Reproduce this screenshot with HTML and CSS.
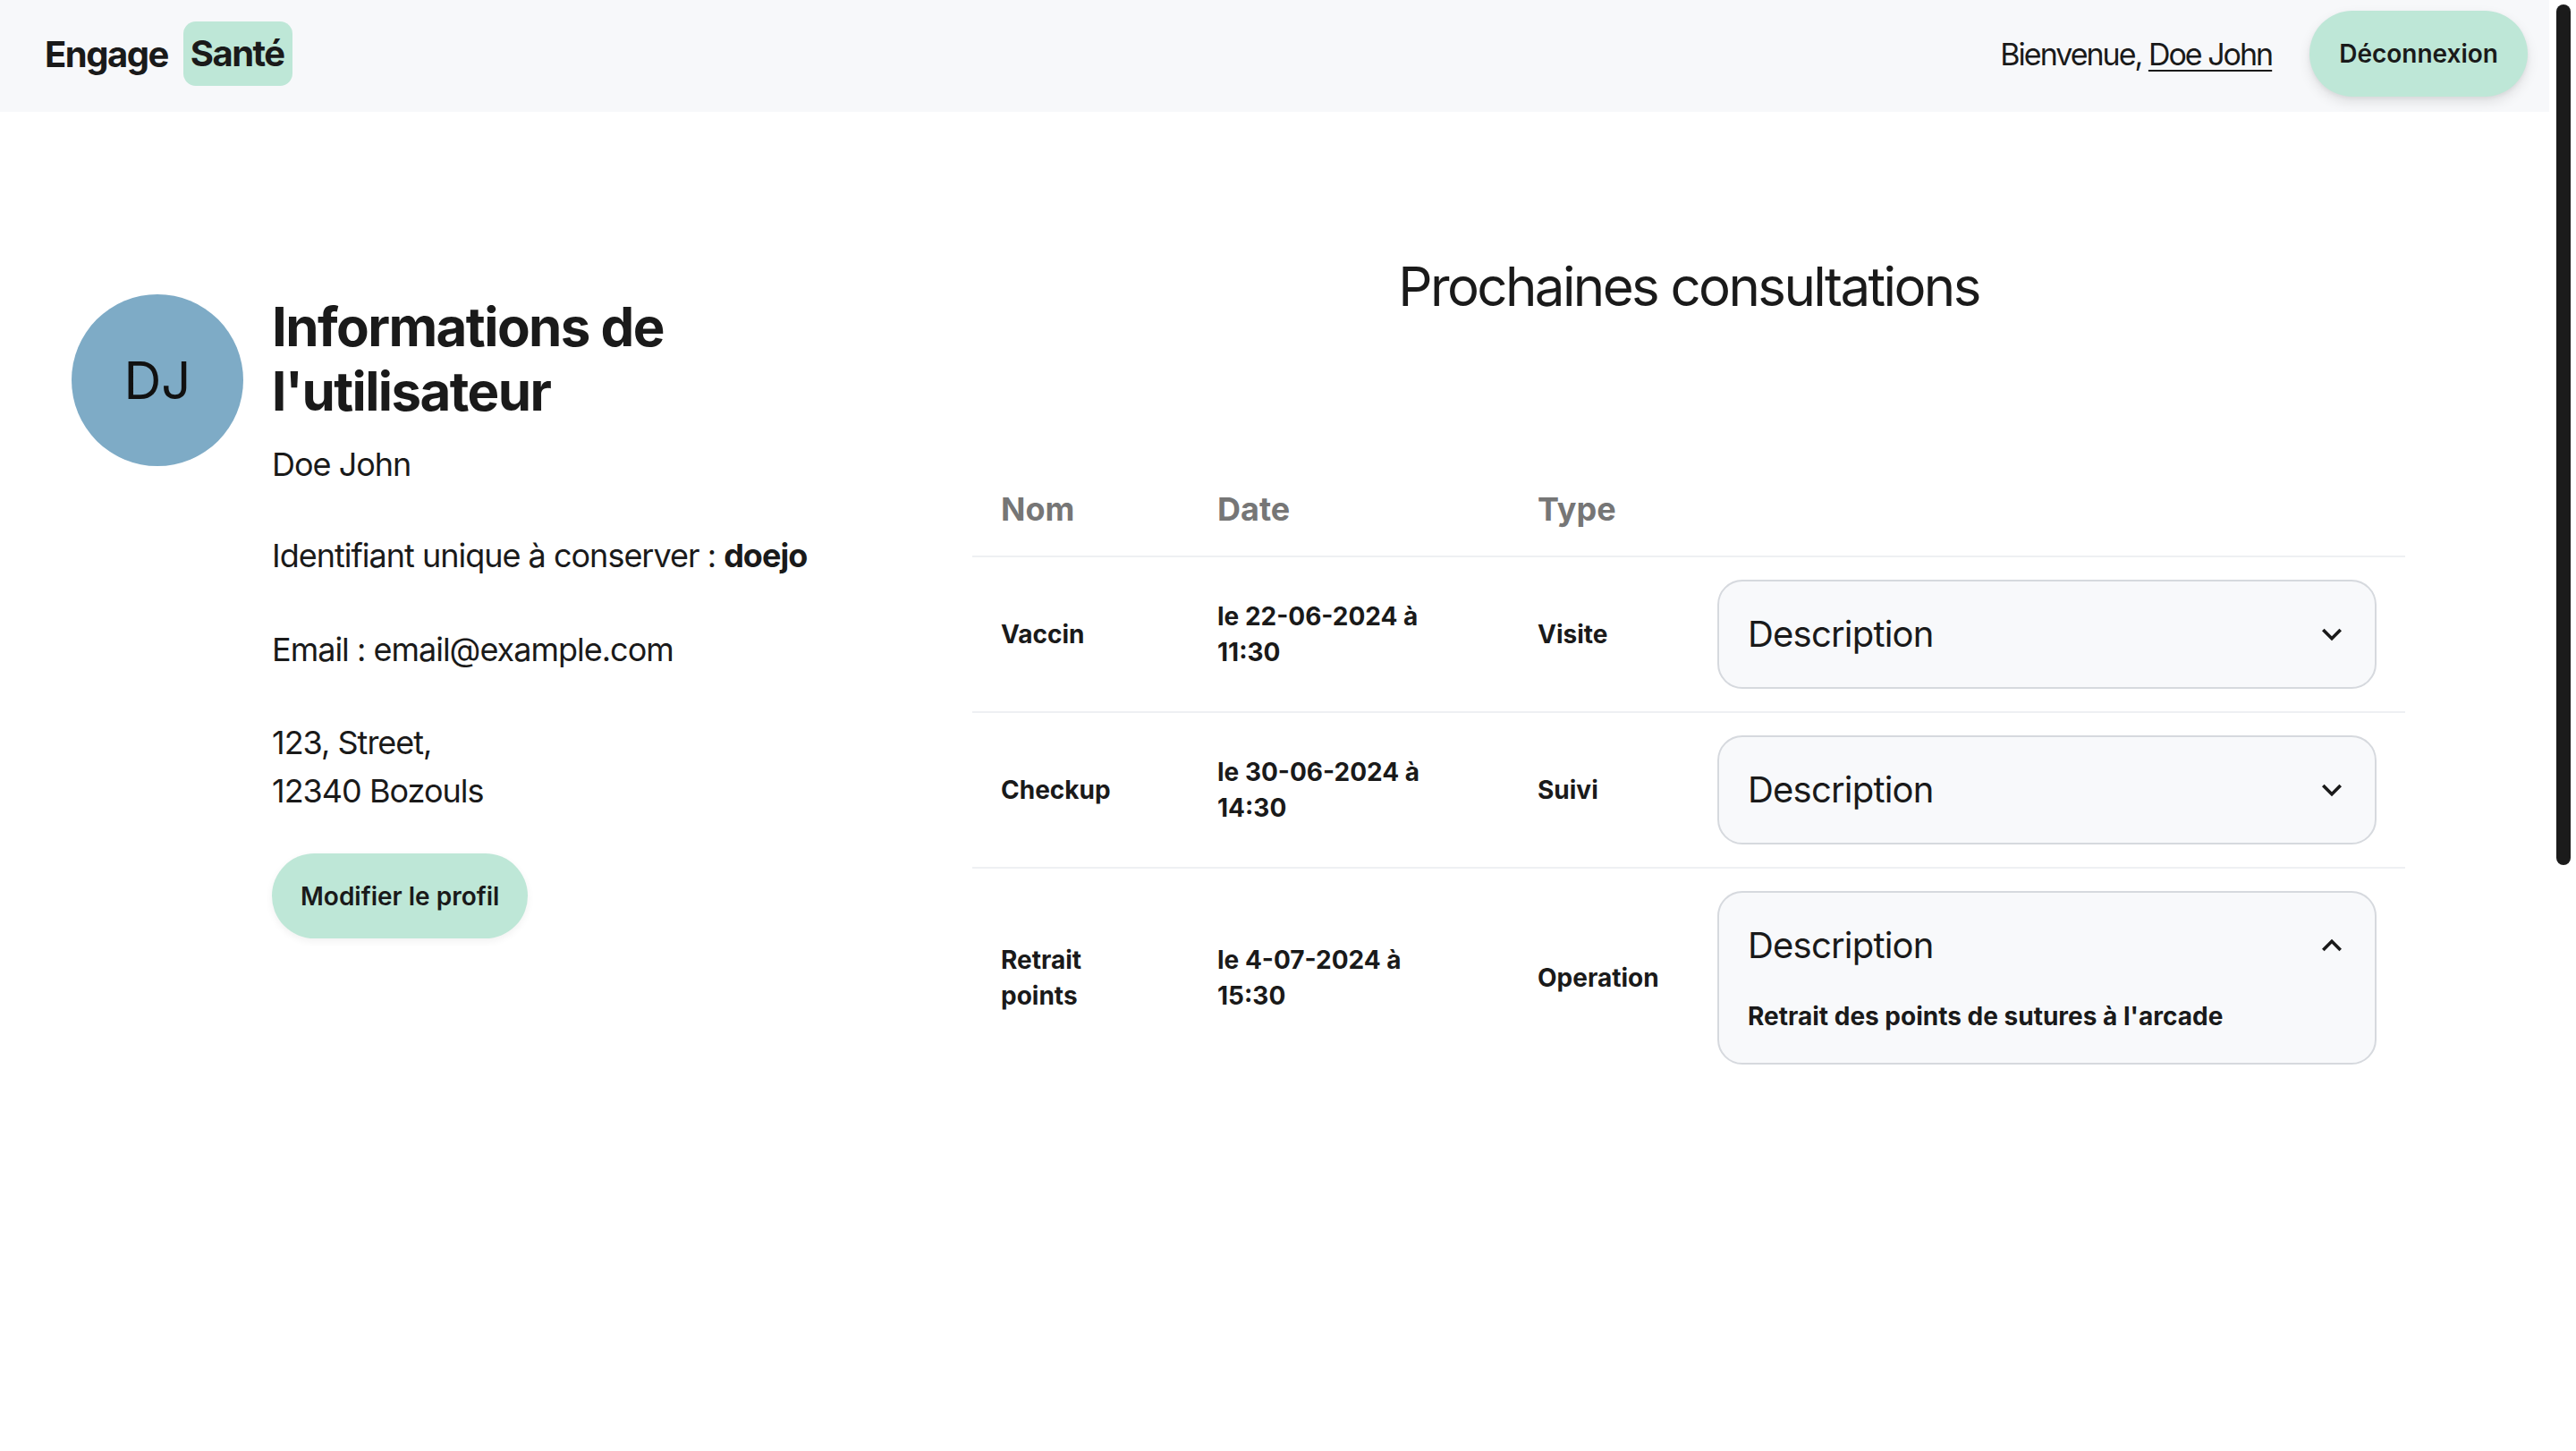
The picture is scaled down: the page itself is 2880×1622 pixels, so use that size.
FILE: index.html
```html
<!DOCTYPE html>
<html lang="fr">
<head>
<meta charset="utf-8">
<title>Engage Santé</title>
<link rel="stylesheet" href="styles.css">
</head>
<body>
<div class="shell">
  <div class="page">
    <header class="topbar">
      <div class="brand">
        <span class="brand-name">Engage</span>
        <span class="brand-badge">Santé</span>
      </div>
      <div class="userbox">
        <span class="welcome">Bienvenue, <a class="welcome-link" href="#">Doe John</a></span>
        <button class="pill-btn">Déconnexion</button>
      </div>
    </header>

    <main class="content">
      <section class="profile">
        <div class="avatar">DJ</div>
        <div class="info">
          <h1 class="info-title">Informations de l'utilisateur</h1>
          <p class="info-name">Doe John</p>
          <p class="info-id">Identifiant unique à conserver : <strong>doejo</strong></p>
          <p class="info-email">Email : email@example.com</p>
          <p class="info-address">123, Street,<br>12340 Bozouls</p>
          <button class="pill-btn edit-btn">Modifier le profil</button>
        </div>
      </section>

      <section class="consult">
        <h2 class="consult-title">Prochaines consultations</h2>
        <table class="consult-table">
          <colgroup>
            <col class="col-nom">
            <col class="col-date">
            <col class="col-type">
            <col class="col-desc">
          </colgroup>
          <thead>
            <tr>
              <th>Nom</th>
              <th>Date</th>
              <th>Type</th>
              <th></th>
            </tr>
          </thead>
          <tbody>
            <tr>
              <td>Vaccin</td>
              <td class="date-cell">le 22-06-2024 à 11:30</td>
              <td class="type-cell">Visite</td>
              <td>
                <div class="acc">
                  <div class="acc-btn">
                    <span>Description</span>
                    <svg class="acc-icon" viewBox="0 0 24 24"><path d="M16.59 8.59L12 13.17 7.41 8.59 6 10l6 6 6-6z"/></svg>
                  </div>
                </div>
              </td>
            </tr>
            <tr>
              <td>Checkup</td>
              <td class="date-cell">le 30-06-2024 à 14:30</td>
              <td class="type-cell">Suivi</td>
              <td>
                <div class="acc">
                  <div class="acc-btn">
                    <span>Description</span>
                    <svg class="acc-icon" viewBox="0 0 24 24"><path d="M16.59 8.59L12 13.17 7.41 8.59 6 10l6 6 6-6z"/></svg>
                  </div>
                </div>
              </td>
            </tr>
            <tr>
              <td>Retrait points</td>
              <td class="date-cell">le 4-07-2024 à 15:30</td>
              <td class="type-cell">Operation</td>
              <td>
                <div class="acc">
                  <div class="acc-btn">
                    <span>Description</span>
                    <svg class="acc-icon" viewBox="0 0 24 24"><path d="M12 8l-6 6 1.41 1.41L12 10.83l4.59 4.58L18 14z"/></svg>
                  </div>
                  <div class="acc-panel">Retrait des points de sutures à l'arcade</div>
                </div>
              </td>
            </tr>
          </tbody>
        </table>
      </section>
    </main>
  </div>
  <div class="scrolltrack"><div class="scrollthumb"></div></div>
</div>
</body>
</html>
```

FILE: styles.css
```css
* { box-sizing: border-box; }

html, body {
  margin: 0;
  padding: 0;
  background: #ffffff;
  overflow: hidden;
}

body {
  font-family: Inter, "Noto Sans", "Liberation Sans", sans-serif;
  color: #1a1a1a;
  width: 2880px;
  height: 1622px;
}

.shell {
  display: flex;
  height: 1622px;
}

.page {
  flex: 1;
  min-width: 0;
}

.scrolltrack {
  width: 30px;
  background: #ffffff;
  padding: 5px 6px 0 8px;
}

.scrollthumb {
  width: 16px;
  height: 962px;
  border-radius: 8px;
  background: #1b1b1b;
}

/* ---------- header ---------- */
.topbar {
  height: 125px;
  background: #f7f8fa;
  display: flex;
  align-items: center;
  justify-content: space-between;
  padding: 0 24px 5px 50px;
}

.brand {
  display: flex;
  align-items: center;
  gap: 17px;
  font-size: 40px;
  font-weight: 700;
  letter-spacing: -1.5px;
}

.brand-badge {
  background: #bee7d7;
  padding: 6px 9px 6px 8px;
  line-height: 60px;
  border-radius: 14px;
}

.userbox {
  display: flex;
  align-items: center;
  gap: 42px;
}

.welcome {
  font-size: 34px;
  letter-spacing: -2px;
}

.welcome-link {
  color: inherit;
  text-decoration: underline;
  text-underline-offset: 5px;
  text-decoration-thickness: 2px;
}

.pill-btn {
  font-family: inherit;
  height: 96px;
  padding: 0 33px;
  border: none;
  border-radius: 48px;
  background: #bee7d7;
  color: #1a1a1a;
  font-size: 28px;
  font-weight: 600;
  box-shadow: 0 6px 14px rgba(0, 0, 0, 0.10), 0 2px 4px rgba(0, 0, 0, 0.05);
}

/* ---------- main ---------- */
.content {
  display: flex;
  align-items: flex-start;
  padding-left: 80px;
}

.profile {
  display: flex;
  align-items: flex-start;
  gap: 32px;
  margin-top: 204px;
}

.avatar {
  width: 192px;
  height: 192px;
  flex: none;
  border-radius: 50%;
  background: #7eabc6;
  color: #111;
  display: flex;
  align-items: center;
  justify-content: center;
  font-size: 58px;
}

.info {
  width: 642px;
}

.info p {
  margin: 0;
  font-size: 36px;
  line-height: 54px;
  letter-spacing: -1px;
}

.info-title {
  margin: 0;
  font-size: 60px;
  line-height: 72px;
  font-weight: 700;
  letter-spacing: -1.6px;
}

.info-name { margin-top: 19px !important; }
.info-id { margin-top: 48px !important; }
.info-email { margin-top: 51px !important; }
.info-address { margin-top: 50px !important; }

.edit-btn {
  margin-top: 43px;
  height: 95px;
  padding: 0 32px;
  box-shadow: 0 3px 8px rgba(0, 0, 0, 0.06);
}

.consult {
  margin-left: 141px;
  margin-top: 159px;
  width: 1602px;
}

.consult-title {
  margin: 0 0 162px;
  text-align: center;
  font-size: 60px;
  line-height: 72px;
  font-weight: 400;
  letter-spacing: -2.6px;
}

.consult-table {
  width: 1602px;
  table-layout: fixed;
  border-collapse: collapse;
}

.col-nom { width: 242px; }
.col-date { width: 358px; }
.col-type { width: 201px; }
.col-desc { width: 801px; }

.consult-table th {
  text-align: left;
  font-size: 36px;
  line-height: 54px;
  font-weight: 700;
  color: #767676;
  padding: 24px 32px 25px;
  border-bottom: 2px solid #eef0f3;
}

.consult-table td {
  font-size: 28px;
  line-height: 40px;
  font-weight: 700;
  padding: 25px 32px;
  vertical-align: middle;
  border-bottom: 2px solid #eef0f3;
}

.consult-table td.date-cell {
  padding-right: 70px;
}

.consult-table tbody tr:last-child td {
  border-bottom: none;
}

.type-cell { white-space: nowrap; }

.acc {
  border: 2px solid #d6d9de;
  border-radius: 28px;
  background: #f8f9fb;
}

.acc-btn {
  display: flex;
  align-items: center;
  justify-content: space-between;
  padding: 35px 26px 35px 32px;
  font-size: 40px;
  line-height: 48px;
  font-weight: 400;
  letter-spacing: -0.8px;
}

.acc-icon {
  display: block;
  width: 44px;
  height: 44px;
  fill: #1a1a1a;
}

.acc-panel {
  padding: 0 32px 32px;
  font-size: 28px;
  line-height: 40px;
  font-weight: 700;
}
```
